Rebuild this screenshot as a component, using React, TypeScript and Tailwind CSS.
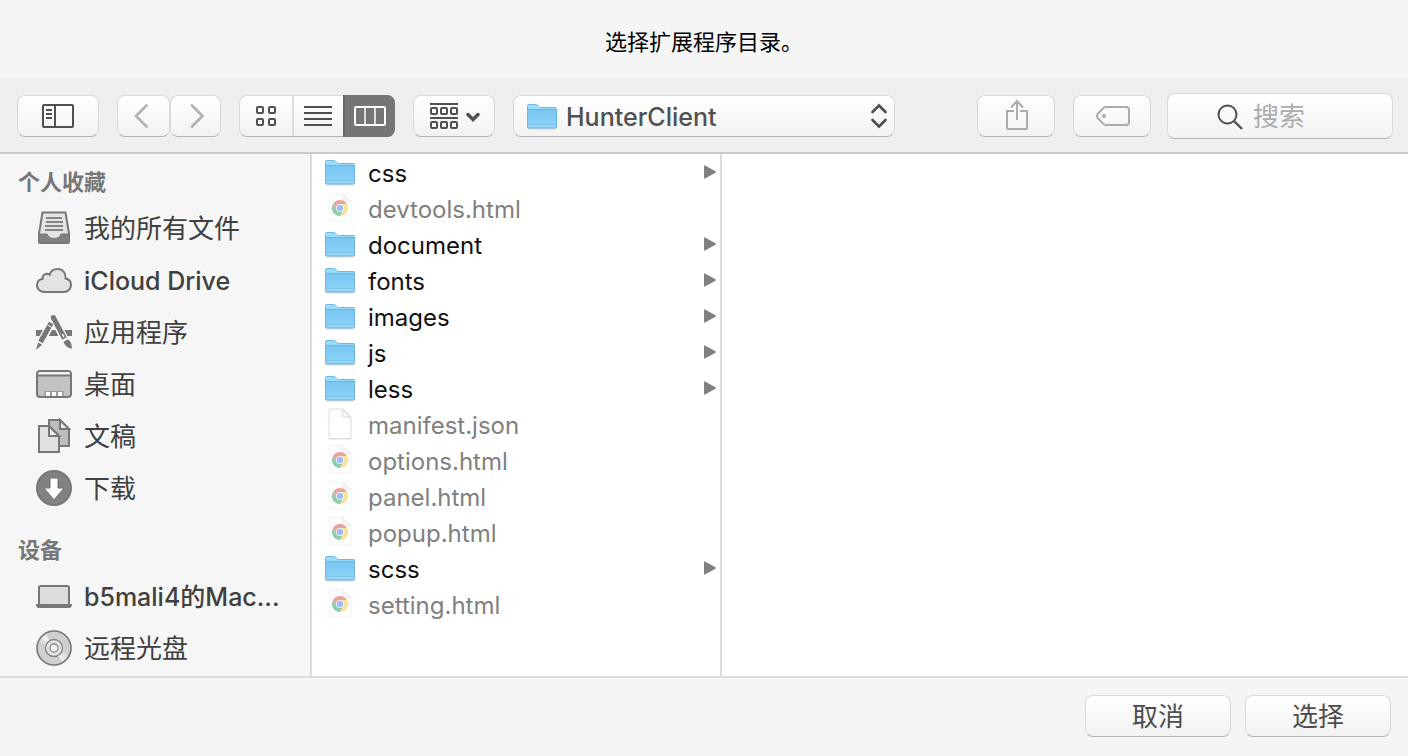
import React from 'react';

const surface =
  'rounded-lg border border-[#d9d9d9] border-b-[#b4b4b4] bg-linear-to-b from-white to-[#f2f2f2]';

function Folder({ className = '' }: { className?: string }) {
  return (
    <svg width="32" height="28" viewBox="0 0 32 28" className={className} aria-hidden="true">
      <defs>
        <linearGradient id="folder" x1="0" y1="0" x2="0" y2="1">
          <stop offset="0" stopColor="#77c6f3" />
          <stop offset="1" stopColor="#90d3f8" />
        </linearGradient>
      </defs>
      <path d="M2 26.8h28" stroke="#000" strokeOpacity=".14" strokeWidth="1.4" />
      <path d="M1.5 24V3.6c0-.7.5-1.1 1.1-1.1h7.3c.8 0 1.200.3 1.800.9l1.300 1.300c.5.5.9.8 1.700.8h14.600c.8 0 1.200.4 1.200 1.100V24z" fill="#9adcfb" stroke="#72b9e1" strokeWidth="1" />
      <path d="M1.500 7.500h29V25c0 .6-.3 1-1 1h-27c-.7 0-1-.4-1-1z" fill="url(#folder)" stroke="#6fb4db" strokeWidth="1" />
      <path d="M2 22.500h28" stroke="#7cc2ea" strokeWidth="1" />
      <path d="M2 23.500h28" stroke="#a3dcfa" strokeWidth="1" />
    </svg>
  );
}

function ChromeDoc() {
  return (
    <svg width="32" height="32" viewBox="0 0 32 32" className="mb-[2px]" aria-hidden="true">
      <path d="M5.500 1.500h13.500l8 8V29h-21.500z" fill="#fdfdfd" stroke="#f3f3f3" />
      <path d="M19 1.500l8 8h-6.500c-1 0-1.500-.5-1.500-1.500z" fill="#f4f4f4" stroke="#ebebeb" strokeWidth=".8" />
      <path d="M16 12h6.900a8 8 0 0 0-13.830 0l3.430 6z" fill="#e9a29c" />
      <path d="M9.070 12A8 8 0 0 0 16 24l3.460-6L16 20l-3.500-2z" fill="#92cbaa" />
      <path d="M19.460 18L16 24a8 8 0 0 0 6.930-12H16z" fill="#fbe196" />
      <circle cx="16" cy="16" r="4" fill="#f6f8fd" />
      <circle cx="16" cy="16" r="3.200" fill="#9dbdf8" />
    </svg>
  );
}

function PlainDoc() {
  return (
    <svg width="32" height="32" viewBox="0 0 32 32" className="mb-[2px]" aria-hidden="true">
      <path d="M4.500 31.300h22.500" stroke="#ececec" />
      <path d="M5 1h14l8 8v21.500H5z" fill="#fff" stroke="#dcdcdc" />
      <path d="M18.800 1.500v6c0 1 .5 1.500 1.500 1.500h6.500z" fill="#f8f8f8" stroke="#d6d6d6" />
    </svg>
  );
}

const icon = { width: 36, height: 36, viewBox: '0 0 36 36', 'aria-hidden': true as const, className: 'shrink-0' };

const AllFiles = () => (
  <svg {...icon}>
    <path d="M6.500 2.500h23l3.500 21v8a1.500 1.500 0 0 1-1.500 1.500h-27a1.500 1.500 0 0 1-1.500-1.500v-8z" fill="#e4e4e4" stroke="#777" strokeWidth="2" />
    <path d="M3 24h8c1 3 3.500 4.500 7 4.500s6-1.500 7-4.500h8v7.500a1.500 1.500 0 0 1-1.500 1.500h-27a1.500 1.500 0 0 1-1.500-1.500z" fill="#808080" stroke="#777" />
    <path d="M10 8h16M10 12h17M9 16h18M9 20h18" stroke="#858585" strokeWidth="2" />
  </svg>
);
const Cloud = () => (
  <svg {...icon}>
    <path d="M8.500 30C4 30 1 27 1 23.300c0-3.600 2.500-6 5.600-6.600-.6-4 4-6.200 7-3.900C14.800 9 18 7 21.600 7c5 0 8.500 4 8 9.500 3 .5 5.400 3 5.400 6.500 0 4-3 7-7.200 7z" fill="#e3e3e3" stroke="#777" strokeWidth="2" />
  </svg>
);
const Apps = () => (
  <svg {...icon}>
    <path d="M0 16h8l-3 6H0zM14 16h8l3 6H11zM28 16h8v6h-5z" fill="#777" />
    <path d="M16.500 6.500L5 28" stroke="#f6f6f6" strokeWidth="8" />
    <path d="M17 3L30 28" stroke="#f6f6f6" strokeWidth="8" />
    <path d="M15.200 9L4.500 28" stroke="#777" strokeWidth="5" />
    <path d="M11.500 11l5 2.800" stroke="#f6f6f6" strokeWidth="1" />
    <path d="M2.200 28.500l4 2.200L.8 35.200H0z" fill="#777" />
    <path d="M17.500 4L28.500 25" stroke="#f6f6f6" strokeWidth="7" />
    <path d="M17.300 3.500L28.500 24.500" stroke="#777" strokeWidth="5" />
    <circle cx="17.300" cy="3.600" r="2.500" fill="#777" />
    <path d="M26.600 20.500l1 2" stroke="#f6f6f6" strokeWidth="1.500" strokeLinecap="round" />
    <path d="M27.500 28l4.300-2.700c3 2.400 4.200 5 4 9.500-4-.6-7-3-8.300-6.800z" fill="#777" />
  </svg>
);
const Desktop = () => (
  <svg {...icon}>
    <rect x="1" y="5" width="34" height="26" rx="3" fill="#c2c2c2" stroke="#777" strokeWidth="2" />
    <path d="M2 9V8q0-2 2-2h28q2 0 2 2v1z" fill="#f0f0f0" />
    <path d="M2 9.500h32" stroke="#777" strokeWidth="2" />
    <path d="M8.500 30v-5h19v5" fill="#999" />
    <path d="M10 26h4v4h-4zM16 26h4v4h-4zM22 26h4v4h-4z" fill="#fff" />
  </svg>
);
const Documents = () => (
  <svg {...icon}>
    <path d="M13 2h11l9 9v17H13z" fill="#bdbdbd" stroke="#777" strokeWidth="2" />
    <path d="M24 2v9h9z" fill="#ededed" stroke="#777" strokeWidth="2" />
    <path d="M3 8h10l10 10v16H3z" fill="#e1e1e1" stroke="#777" strokeWidth="2" />
    <path d="M13 8v10h10z" fill="#eee" stroke="#777" strokeWidth="2" />
  </svg>
);
const Downloads = () => (
  <svg {...icon}>
    <circle cx="18" cy="18" r="17" fill="#828282" stroke="#777" strokeWidth="2" />
    <path d="M14 8h8v10h6L18 30 8 18h6z" fill="#fff" stroke="#6d6d6d" />
  </svg>
);
const Laptop = () => (
  <svg {...icon}>
    <path d="M0 26h36q0 4-3 4H3q-3 0-3-4z" fill="#777" />
    <rect x="3" y="8" width="30" height="19" rx="1.500" fill="#dcdcdc" stroke="#777" strokeWidth="2" />
    <path d="M2 27h32" stroke="#777" strokeWidth="2" />
  </svg>
);
const Disc = () => (
  <svg {...icon}>
    <circle cx="18" cy="18" r="17" fill="#cfcfcf" stroke="#777" strokeWidth="1.600" />
    <path d="M18 18L5 9l5-4.500zM18 18l8 13.500 5-4.500z" fill="#f2f2f2" />
    <path d="M18 18L3.500 12 6 8zM18 18l11 11.500 3-5.500z" fill="#dedede" />
    <circle cx="18" cy="18" r="8.500" fill="#e2e2e2" stroke="#858585" strokeWidth="1.300" />
    <circle cx="18" cy="18" r="4" fill="#f5f5f5" stroke="#858585" strokeWidth="1.300" />
  </svg>
);

type Place = { label: string; Icon: () => React.ReactElement; latin?: boolean };

const favorites: Place[] = [
  { label: '我的所有文件', Icon: AllFiles },
  { label: 'iCloud Drive', Icon: Cloud, latin: true },
  { label: '应用程序', Icon: Apps },
  { label: '桌面', Icon: Desktop },
  { label: '文稿', Icon: Documents },
  { label: '下载', Icon: Downloads },
];
const devices: Place[] = [
  { label: 'b5mali4的Mac...', Icon: Laptop, latin: true },
  { label: '远程光盘', Icon: Disc },
];

const files: { name: string; kind: 'folder' | 'html' | 'plain' }[] = [
  { name: 'css', kind: 'folder' },
  { name: 'devtools.html', kind: 'html' },
  { name: 'document', kind: 'folder' },
  { name: 'fonts', kind: 'folder' },
  { name: 'images', kind: 'folder' },
  { name: 'js', kind: 'folder' },
  { name: 'less', kind: 'folder' },
  { name: 'manifest.json', kind: 'plain' },
  { name: 'options.html', kind: 'html' },
  { name: 'panel.html', kind: 'html' },
  { name: 'popup.html', kind: 'html' },
  { name: 'scss', kind: 'folder' },
  { name: 'setting.html', kind: 'html' },
];

function PlaceList({ items }: { items: Place[] }) {
  return (
    <ul>
      {items.map(({ label, Icon, latin }) => (
        <li key={label}>
          <a href="#" className="flex h-[52px] items-center gap-3 pl-9 whitespace-nowrap text-[#404040]">
            <Icon />
            <span className={latin ? 'pt-1 text-[25px] font-medium' : 'text-[26px]'}>{label}</span>
          </a>
        </li>
      ))}
    </ul>
  );
}

function Toolbar() {
  return (
    <div className="flex h-[76px] shrink-0 items-center gap-[18px] border-b-2 border-[#cbcbcb] bg-[#efefef] pt-[2px] pr-[15px] pl-[17px]">
      <button aria-label="边栏" className={`flex h-[42px] w-[82px] items-center justify-center ${surface}`}>
        <svg width="32" height="24" viewBox="0 0 32 24" fill="none" stroke="#505050" strokeWidth="2">
          <rect x="1" y="1" width="30" height="22" rx="1" />
          <path d="M13 1v22M4 6h6M4 10h6M4 14h6" />
        </svg>
      </button>

      <div className="flex">
        <button aria-label="后退" className={`flex h-[42px] w-[53px] items-center justify-center pr-1 ${surface}`}>
          <svg width="16" height="26" viewBox="0 0 16 26" fill="none" stroke="#b3b3b3" strokeWidth="2.800" strokeLinecap="round">
            <path d="M12.500 2.500L2 13l10.500 10.500" />
          </svg>
        </button>
        <button aria-label="前进" className={`flex h-[42px] w-[51px] items-center justify-center ${surface}`}>
          <svg width="16" height="26" viewBox="0 0 16 26" fill="none" stroke="#b3b3b3" strokeWidth="2.800" strokeLinecap="round">
            <path d="M4 2.500L14.500 13 4 23.500" />
          </svg>
        </button>
      </div>

      <div className={`flex h-[42px] w-[156px] ${surface}`}>
        <button aria-label="图标" className="flex flex-1 items-center justify-center border-r-2 border-[#dedede]">
          <svg width="20" height="20" viewBox="0 0 20 20" fill="none" stroke="#505050" strokeWidth="2">
            <rect x="1" y="1" width="6" height="6" rx="1" />
            <rect x="13" y="1" width="6" height="6" rx="1" />
            <rect x="1" y="13" width="6" height="6" rx="1" />
            <rect x="13" y="13" width="6" height="6" rx="1" />
          </svg>
        </button>
        <button aria-label="列表" className="flex w-[49px] items-center justify-center pr-[2px]">
          <svg width="28" height="20" viewBox="0 0 28 20" stroke="#505050" strokeWidth="2">
            <path d="M0 1h28M0 7h28M0 13h28M0 19h28" />
          </svg>
        </button>
        <button aria-label="分栏" className="-my-px -mr-px flex w-[52px] items-center justify-center rounded-r-lg border-l-2 border-[#666] bg-[#757575]">
          <svg width="32" height="20" viewBox="0 0 32 20" fill="none" stroke="#fff" strokeWidth="2">
            <rect x="1" y="1" width="30" height="18" rx="1" />
            <path d="M11 1v18M21 1v18" strokeWidth="1.500" />
          </svg>
        </button>
      </div>

      <button aria-label="排列方式" className={`flex h-[42px] w-[82px] items-center justify-center gap-2 pl-[2px] ${surface}`}>
        <svg width="28" height="26" viewBox="0 0 28 26" fill="none" stroke="#505050" strokeWidth="2">
          <path d="M0 1h28M0 15h28" />
          {[1, 11, 21].map((x) => (
            <React.Fragment key={x}>
              <rect x={x} y="5" width="6" height="6" rx="1" />
              <rect x={x} y="19" width="6" height="6" rx="1" />
            </React.Fragment>
          ))}
        </svg>
        <svg width="14" height="12" viewBox="0 0 14 12" fill="none" stroke="#505050" strokeWidth="3.500" strokeLinecap="round">
          <path d="M2 4.500l5 5 5-5" />
        </svg>
      </button>

      <div className="relative w-[382px]">
        <select aria-label="位置" className={`block h-[42px] w-full appearance-none pt-[2px] pr-10 pl-[52px] text-[25px] leading-8 font-medium text-[#505050] ${surface}`}>
          <option>HunterClient</option>
        </select>
        <Folder className="pointer-events-none absolute top-[7px] left-[13px]" />
        <svg width="18" height="26" viewBox="0 0 18 26" fill="none" stroke="#505050" strokeWidth="2.700" strokeLinecap="round" className="pointer-events-none absolute top-2 right-[7px]">
          <path d="M2.500 9L9 2.500 15.500 9M2.500 17L9 23.500l6.500-6.500" />
        </svg>
      </div>

      <div className="ml-auto flex items-center gap-[18px]">
        <button aria-label="共享" className={`flex h-[42px] w-[78px] items-center justify-center pl-[2px] ${surface}`}>
          <svg width="24" height="32" viewBox="0 0 24 32" fill="none" stroke="#ababab" strokeWidth="2" className="mb-[2px]">
            <path d="M9 12H2v17q0 1 1 1h18q1 0 1-1V12h-7M12 21V2M6 8.500L12 2l6 6.500" />
          </svg>
        </button>
        <button aria-label="标签" className={`flex h-[42px] w-[78px] items-center justify-center pl-[2px] ${surface}`}>
          <svg width="34" height="20" viewBox="0 0 34 20" fill="none" stroke="#ababab" strokeWidth="2">
            <path d="M10 1h20q3 0 3 3v12q0 3-3 3H10Q8.500 19 7 17.500L2 12.500Q0 10 2 7.500l5-5Q8.500 1 10 1z" />
            <circle cx="8" cy="10" r="2" fill="#ababab" stroke="none" />
          </svg>
        </button>
      </div>

      <label className={`-ml-[2px] flex h-[46px] w-[226px] items-center gap-2 pl-[49px] ${surface}`}>
        <svg width="28" height="28" viewBox="0 0 28 28" fill="none" stroke="#4f4f4f" strokeWidth="2" className="shrink-0">
          <circle cx="10.500" cy="12.500" r="9" />
          <path d="M17 19l8 8" strokeWidth="2.400" />
        </svg>
        <input aria-label="搜索" placeholder="搜索" className="w-full min-w-0 bg-transparent pt-[2px] text-[26px] leading-9 text-[#404040] outline-none placeholder:text-[#adadad]" />
      </label>
    </div>
  );
}

export default function App() {
  return (
    <div className="flex min-h-screen flex-col bg-[#f5f5f5] font-['Inter','Noto_Sans_CJK_SC',sans-serif]">
      <header className="flex h-[78px] shrink-0 items-center justify-center pt-[6px]">
        <h1 className="text-[22px] leading-8 text-black">选择扩展程序目录。</h1>
      </header>

      <Toolbar />

      <main className="flex flex-1">
        <nav className="w-[312px] shrink-0 border-r-2 border-[#dcdcdc] bg-[#f6f6f6]">
          <h2 className="h-12 pt-3 pl-[18px] text-[22px] leading-8 font-bold text-[#777]">个人收藏</h2>
          <PlaceList items={favorites} />
          <h2 className="h-14 pt-5 pl-[18px] text-[22px] leading-8 font-bold text-[#777]">设备</h2>
          <PlaceList items={devices} />
        </nav>

        <ul className="w-[410px] shrink-0 border-r-2 border-[#dcdcdc] bg-white pt-px">
          {files.map(({ name, kind }) => (
            <li key={name}>
              <a
                href="#"
                className={`flex h-9 items-center gap-3 pr-1 pl-3 text-2xl ${kind === 'folder' ? 'text-[#111]' : 'text-[#808080]'}`}
              >
                {kind === 'folder' ? <Folder className="mb-[2px]" /> : kind === 'html' ? <ChromeDoc /> : <PlainDoc />}
                <span className="flex-1 pt-[2px]">{name}</span>
                {kind === 'folder' && (
                  <svg width="12" height="14" viewBox="0 0 12 14" className="mb-[2px]" aria-hidden="true">
                    <path d="M0 1.200Q0 0 1 .5L11.500 6.300Q12.300 7 11.500 7.700L1 13.500Q0 14 0 12.800z" fill="#808080" />
                  </svg>
                )}
              </a>
            </li>
          ))}
        </ul>

        <section className="flex-1 bg-white" />
      </main>

      <footer className="flex h-20 shrink-0 items-start justify-end gap-[14px] border-t-2 border-[#dcdcdc] pt-[17px] pr-[17px]">
        <button className={`h-[42px] w-[146px] pt-[2px] text-[26px] leading-9 text-[#4d4d4d] ${surface}`}>取消</button>
        <button className={`h-[42px] w-[146px] pt-[2px] text-[26px] leading-9 text-[#4d4d4d] ${surface}`}>选择</button>
      </footer>
    </div>
  );
}
